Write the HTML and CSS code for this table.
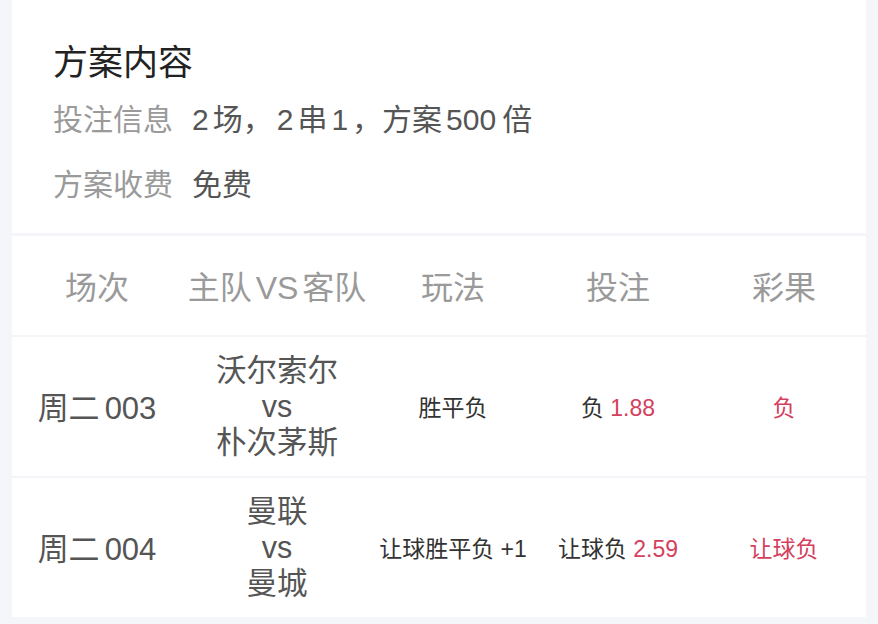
FILE: index.html
```html
<!DOCTYPE html>
<html lang="zh-CN">
<head>
<meta charset="utf-8">
<link rel="stylesheet" href="styles.css">
</head>
<body>
<div class="page">
  <section class="card summary">
    <h1 class="title">方案内容</h1>
    <div class="info-row first">
      <span class="label">投注信息</span>
      <span class="value"><span class="num">2</span>场，<span class="num">2</span>串<span class="num">1</span>，方案<span class="num">500</span>倍</span>
    </div>
    <div class="info-row">
      <span class="label">方案收费</span>
      <span class="value">免费</span>
    </div>
  </section>

  <section class="card table">
    <div class="row head">
      <div class="cell">场次</div>
      <div class="cell">主队<span class="num">VS</span>客队</div>
      <div class="cell">玩法</div>
      <div class="cell">投注</div>
      <div class="cell">彩果</div>
    </div>
    <div class="row body">
      <div class="cell big">周二<span class="num">003</span></div>
      <div class="cell big teams">沃尔索尔<br>vs<br>朴次茅斯</div>
      <div class="cell small">胜平负</div>
      <div class="cell small">负 <span class="red">1.88</span></div>
      <div class="cell small red">负</div>
    </div>
    <div class="row body">
      <div class="cell big">周二<span class="num">004</span></div>
      <div class="cell big teams">曼联<br>vs<br>曼城</div>
      <div class="cell small">让球胜平负 +1</div>
      <div class="cell small">让球负 <span class="red">2.59</span></div>
      <div class="cell small red">让球负</div>
    </div>
  </section>
</div>
</body>
</html>
```

FILE: styles.css
```css
html, body {
  margin: 0;
  padding: 0;
  background: #f4f6fa;
  font-family: "Liberation Sans", "Noto Sans CJK SC", sans-serif;
}

.page {
  padding: 0 12px;
  height: 624px;
  display: flex;
  flex-direction: column;
  gap: 3px;
}

.card {
  background: #ffffff;
}

.summary {
  height: 233px;
  box-sizing: border-box;
  padding: 41px 0 0 41px;
}

.title {
  margin: 0;
  font-size: 35px;
  font-weight: 400;
  line-height: 44px;
  color: #222222;
}

.info-row {
  display: flex;
  gap: 19px;
  font-size: 30px;
  line-height: 40px;
  margin-top: 25px;
}

.info-row.first {
  margin-top: 15px;
}

.label {
  color: #9a9a9a;
}

.value {
  color: #555555;
}

.num {
  margin: 0 4px;
}

.value .num:first-child {
  margin-left: 0;
}

.value .num:last-child {
  margin-right: 6px;
}

.table {
  display: flex;
  flex-direction: column;
  gap: 2px;
  background: #f3f4f7;
}

.row {
  display: grid;
  grid-template-columns: 170px 190px 162px 168px 164px;
  align-items: center;
  background: #ffffff;
}

.row.head {
  height: 99px;
  font-size: 32px;
  color: #9a9a9a;
  box-sizing: border-box;
  padding-bottom: 2px;
}

.row.body {
  height: 139px;
  box-sizing: border-box;
  padding-bottom: 2px;
}

.cell {
  text-align: center;
}

.big {
  font-size: 31px;
  color: #555555;
}

.big .num {
  margin: 0 0 0 5px;
}

.teams {
  font-size: 30.5px;
  line-height: 36px;
}

.small {
  font-size: 23px;
  color: #333333;
}

.red {
  color: #d4405e;
}
```
